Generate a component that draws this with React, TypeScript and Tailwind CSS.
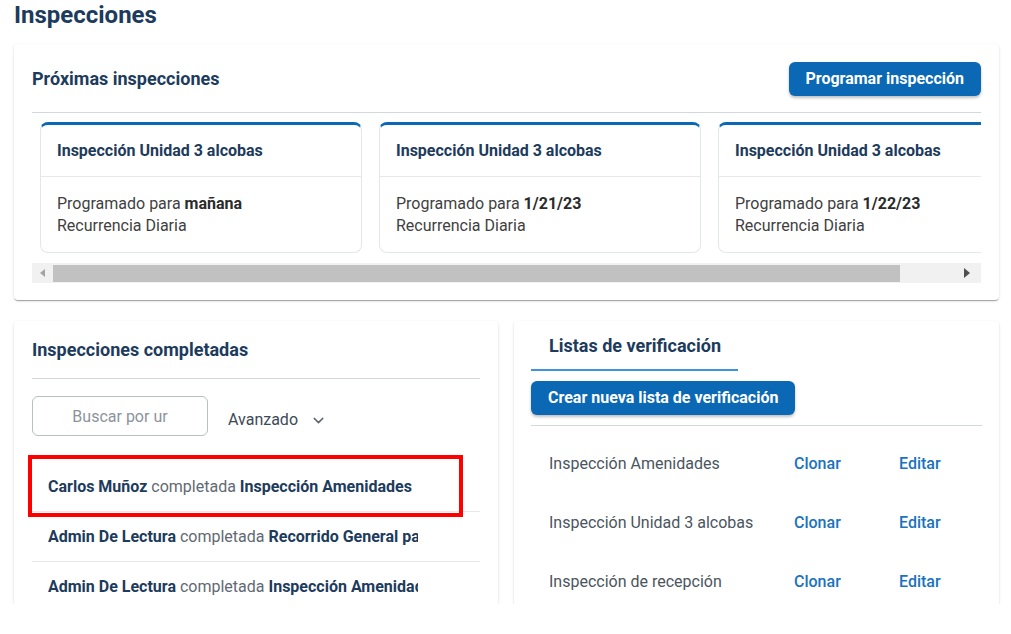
import { ChevronDown } from "lucide-react";

const upcoming = [
  { title: "Inspección Unidad 3 alcobas", when: "mañana" },
  { title: "Inspección Unidad 3 alcobas", when: "1/21/23" },
  { title: "Inspección Unidad 3 alcobas", when: "1/22/23" },
];

const completed = [
  { who: "Carlos Muñoz", what: "Inspección Amenidades" },
  { who: "Admin De Lectura", what: "Recorrido General para unidades" },
  { who: "Admin De Lectura", what: "Inspección Amenidades" },
];

const checklists = [
  "Inspección Amenidades",
  "Inspección Unidad 3 alcobas",
  "Inspección de recepción",
];

const paper =
  "rounded-[4px] bg-white shadow-[0_2px_1px_-1px_rgba(0,0,0,0.2),0_1px_1px_0_rgba(0,0,0,0.14),0_1px_3px_0_rgba(0,0,0,0.12)]";

const blueButton =
  "h-[34px] rounded-[6px] bg-[#0a68b4] px-[17px] text-[16px] font-bold text-white shadow-[0_2px_3px_rgba(0,0,0,0.25)]";

function UpcomingCard({ title, when }: { title: string; when: string }) {
  return (
    <div className="flex h-[131px] w-[322px] shrink-0 flex-col rounded-[8px] border border-[#e3e6ea] border-t-[3px] border-t-[#0a68b4] bg-white">
      <div className="flex h-[52px] items-center border-b border-[#e6e8eb] px-4 pt-[1px] text-[16px] font-bold text-[#1d3b5c]">
        {title}
      </div>
      <div className="flex flex-1 flex-col justify-center px-4 text-[16px] leading-[22px] text-[#3f3f3f]">
        <p>
          Programado para <span className="font-bold text-[#2b2b2b]">{when}</span>
        </p>
        <p>Recurrencia Diaria</p>
      </div>
    </div>
  );
}

function FakeScrollbar() {
  return (
    <div className="mt-[10px] flex h-[20px] items-center bg-[#f1f1f1]">
      <div className="flex w-[21px] justify-center">
        <span className="h-0 w-0 border-y-[4px] border-r-[5px] border-y-transparent border-r-[#a3a3a3]" />
      </div>
      <div className="h-[17px] w-[847px] bg-[#c1c1c1]" />
      <div className="flex-1" />
      <div className="flex w-[28px] justify-center">
        <span className="h-0 w-0 border-y-[5px] border-l-[6px] border-y-transparent border-l-[#505050]" />
      </div>
    </div>
  );
}

export default function App() {
  return (
    <div
      className="h-[604px] overflow-hidden bg-white pl-[14px] pr-[12px]"
      style={{ fontFamily: "Roboto, 'Liberation Sans', sans-serif" }}
    >
      <h1 className="flex h-[30px] items-center text-[24px] font-bold text-[#1d3b5c]">
        Inspecciones
      </h1>

      <section className={`${paper} mt-[14px] px-[18px] pb-[17px] pt-[18px]`}>
        <div className="flex items-center justify-between">
          <h2 className="-mt-[2px] text-[18px] font-bold text-[#1d3b5c]">Próximas inspecciones</h2>
          <button className={blueButton}>Programar inspección</button>
        </div>
        <div className="mt-[16px] border-t border-[#d3d8dd]" />
        <div className="mt-[9px] flex gap-[17px] overflow-hidden pl-2">
          {upcoming.map((u, i) => (
            <UpcomingCard key={i} title={u.title} when={u.when} />
          ))}
        </div>
        <FakeScrollbar />
      </section>

      <div className="mt-[21px] grid grid-cols-[484px_485px] gap-[16px]">
        <section className={`${paper} h-[320px] px-[18px] pt-[17px]`}>
          <h2 className="flex h-[22px] items-center text-[18px] font-bold text-[#1d3b5c]">
            Inspecciones completadas
          </h2>
          <div className="mt-[18px] border-t border-[#d3d8dd]" />
          <div className="mt-[17px] flex items-center">
            <input
              placeholder="Buscar por ur"
              className="h-[40px] w-[176px] rounded-[6px] border border-[#b9bec4] bg-white px-3 text-center text-[16px] text-[#333] outline-none placeholder:text-[#8b949c]"
            />
            <button className="ml-[20px] mt-[8px] flex items-center gap-[12px] text-[16px] text-[#3d4a57]">
              Avanzado
              <ChevronDown size={17} strokeWidth={2} className="text-[#5c6670]" />
            </button>
          </div>
          <ul className="mt-[26px]">
            {completed.map((c, i) => (
              <li
                key={i}
                className="relative flex h-[50px] items-center border-b border-[#e6e8eb] pl-4"
              >
                <p className="w-[370px] overflow-hidden whitespace-nowrap text-[16px] text-[#5f6973]">
                  <span className="font-bold text-[#1d3b5c]">{c.who}</span> completada{" "}
                  <span className="font-bold text-[#1d3b5c]">{c.what}</span>
                </p>
                {i === 0 && (
                  <div className="pointer-events-none absolute -left-[4px] -top-[7px] h-[62px] w-[435px] border-[4px] border-[#ff0000]" />
                )}
              </li>
            ))}
          </ul>
        </section>

        <section className={`${paper} h-[320px] px-[17px] pt-[11px]`}>
          <div className="w-[207px] border-b-2 border-[#3d93dd] pb-[10px] pl-[18px]">
            <span className="text-[18px] font-bold text-[#1d3b5c]">Listas de verificación</span>
          </div>
          <button className={`${blueButton} mt-[10px]`}>Crear nueva lista de verificación</button>
          <div className="mt-[10px] border-t border-[#d3d8dd]" />
          <ul className="mt-[8px]">
            {checklists.map((name) => (
              <li key={name} className="flex h-[59px] items-center pl-[18px] text-[16px]">
                <span className="w-[245px] text-[#4a5560]">{name}</span>
                <a className="w-[105px] font-medium text-[#1a73be]">Clonar</a>
                <a className="font-medium text-[#1a73be]">Editar</a>
              </li>
            ))}
          </ul>
        </section>
      </div>
    </div>
  );
}
